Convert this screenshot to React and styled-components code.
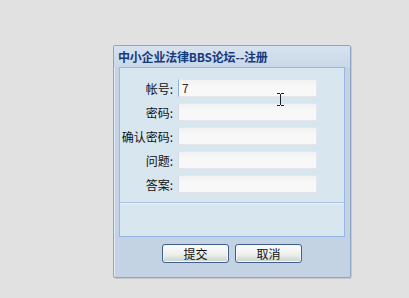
import React from 'react'
import styled, { createGlobalStyle } from 'styled-components'

const Global = createGlobalStyle`
  html, body {
    margin: 0;
    padding: 0;
    background: #e1e1e1;
    width: 409px;
    height: 298px;
    overflow: hidden;
    font-family: "Noto Sans CJK SC", "DejaVu Sans", sans-serif;
  }
`

const Page = styled.div`
  padding: 45px 0 0 113px;
`

const Window = styled.div`
  position: relative;
  width: 236px;
  height: 231px;
  border: 1px solid #8ea5c6;
  border-radius: 2px;
  background: #c3d3e3;
  box-shadow: inset 1px 1px 0 #e3ecf6, 1px 1px 0 #c8c8c8;
  display: flex;
  flex-direction: column;
`

const TitleBar = styled.div`
  height: 21px;
  padding-left: 4px;
  display: flex;
  align-items: center;
  font-size: 12px;
  font-weight: bold;
  color: #173a7c;
  background: linear-gradient(#d6e2ef, #c9d8e8);
  letter-spacing: -0.2px;
`

const Panel = styled.div`
  margin: 0 5px;
  border: 1px solid #97b6e4;
  background: #d8e6f0;
  display: flex;
  flex-direction: column;
`

const Form = styled.div`
  display: flex;
  flex-direction: column;
  gap: 6px;
  padding: 11px 0 9px;
  border-bottom: 1px solid #a9c2e6;
  box-shadow: 0 1px 0 #eaf2f9;
`

const Row = styled.div`
  display: flex;
  align-items: center;
  height: 18px;
`

const Label = styled.label`
  width: 53px;
  text-align: right;
  padding-right: 5px;
  font-size: 12px;
  color: #111;
`

const Input = styled.div`
  box-sizing: border-box;
  width: 139px;
  height: 18px;
  background: linear-gradient(#f1f2f3, #f8f8f8 40%);
  border: 1px solid #e2e6ea;
  border-left-color: ${p => (p.$focus ? '#8fb2e6' : '#d6dde4')};
  font-size: 12px;
  line-height: 16px;
  padding-left: 3px;
  color: #4a2424;
`

const Footer = styled.div`
  height: 33px;
`

const Buttons = styled.div`
  display: flex;
  justify-content: center;
  gap: 6px;
  margin-top: 7px;
`

const Button = styled.button`
  width: 67px;
  height: 19px;
  padding: 0;
  font-family: "Noto Sans CJK SC", sans-serif;
  font-size: 12px;
  line-height: 15px;
  color: #111;
  border: 1px solid #3f5f8c;
  border-radius: 3px;
  background: linear-gradient(#fbfbfb 0%, #eef0ee 55%, #c9d0c9 100%);
  box-shadow: inset 0 0 0 1px #f4f6f8;
`

const Cursor = styled.svg`
  position: absolute;
  left: 163px;
  top: 47px;
`

const fields = [
  { label: '帐号:', value: '7', focus: true },
  { label: '密码:' },
  { label: '确认密码:' },
  { label: '问题:' },
  { label: '答案:' },
]

export default function App() {
  return (
    <Page>
      <Global />
      <Window>
        <TitleBar>中小企业法律BBS论坛--注册</TitleBar>
        <Panel>
          <Form>
            {fields.map(f => (
              <Row key={f.label}>
                <Label>{f.label}</Label>
                <Input $focus={f.focus}>{f.value}</Input>
              </Row>
            ))}
          </Form>
          <Footer />
        </Panel>
        <Buttons>
          <Button>提交</Button>
          <Button>取消</Button>
        </Buttons>
        <Cursor width="7" height="13" viewBox="0 0 7 13">
          <path d="M0 0.5h3M4 0.5h3M3.5 1v11M0 12.5h3M4 12.5h3" stroke="#222" strokeWidth="1" fill="none" />
        </Cursor>
      </Window>
    </Page>
  )
}
